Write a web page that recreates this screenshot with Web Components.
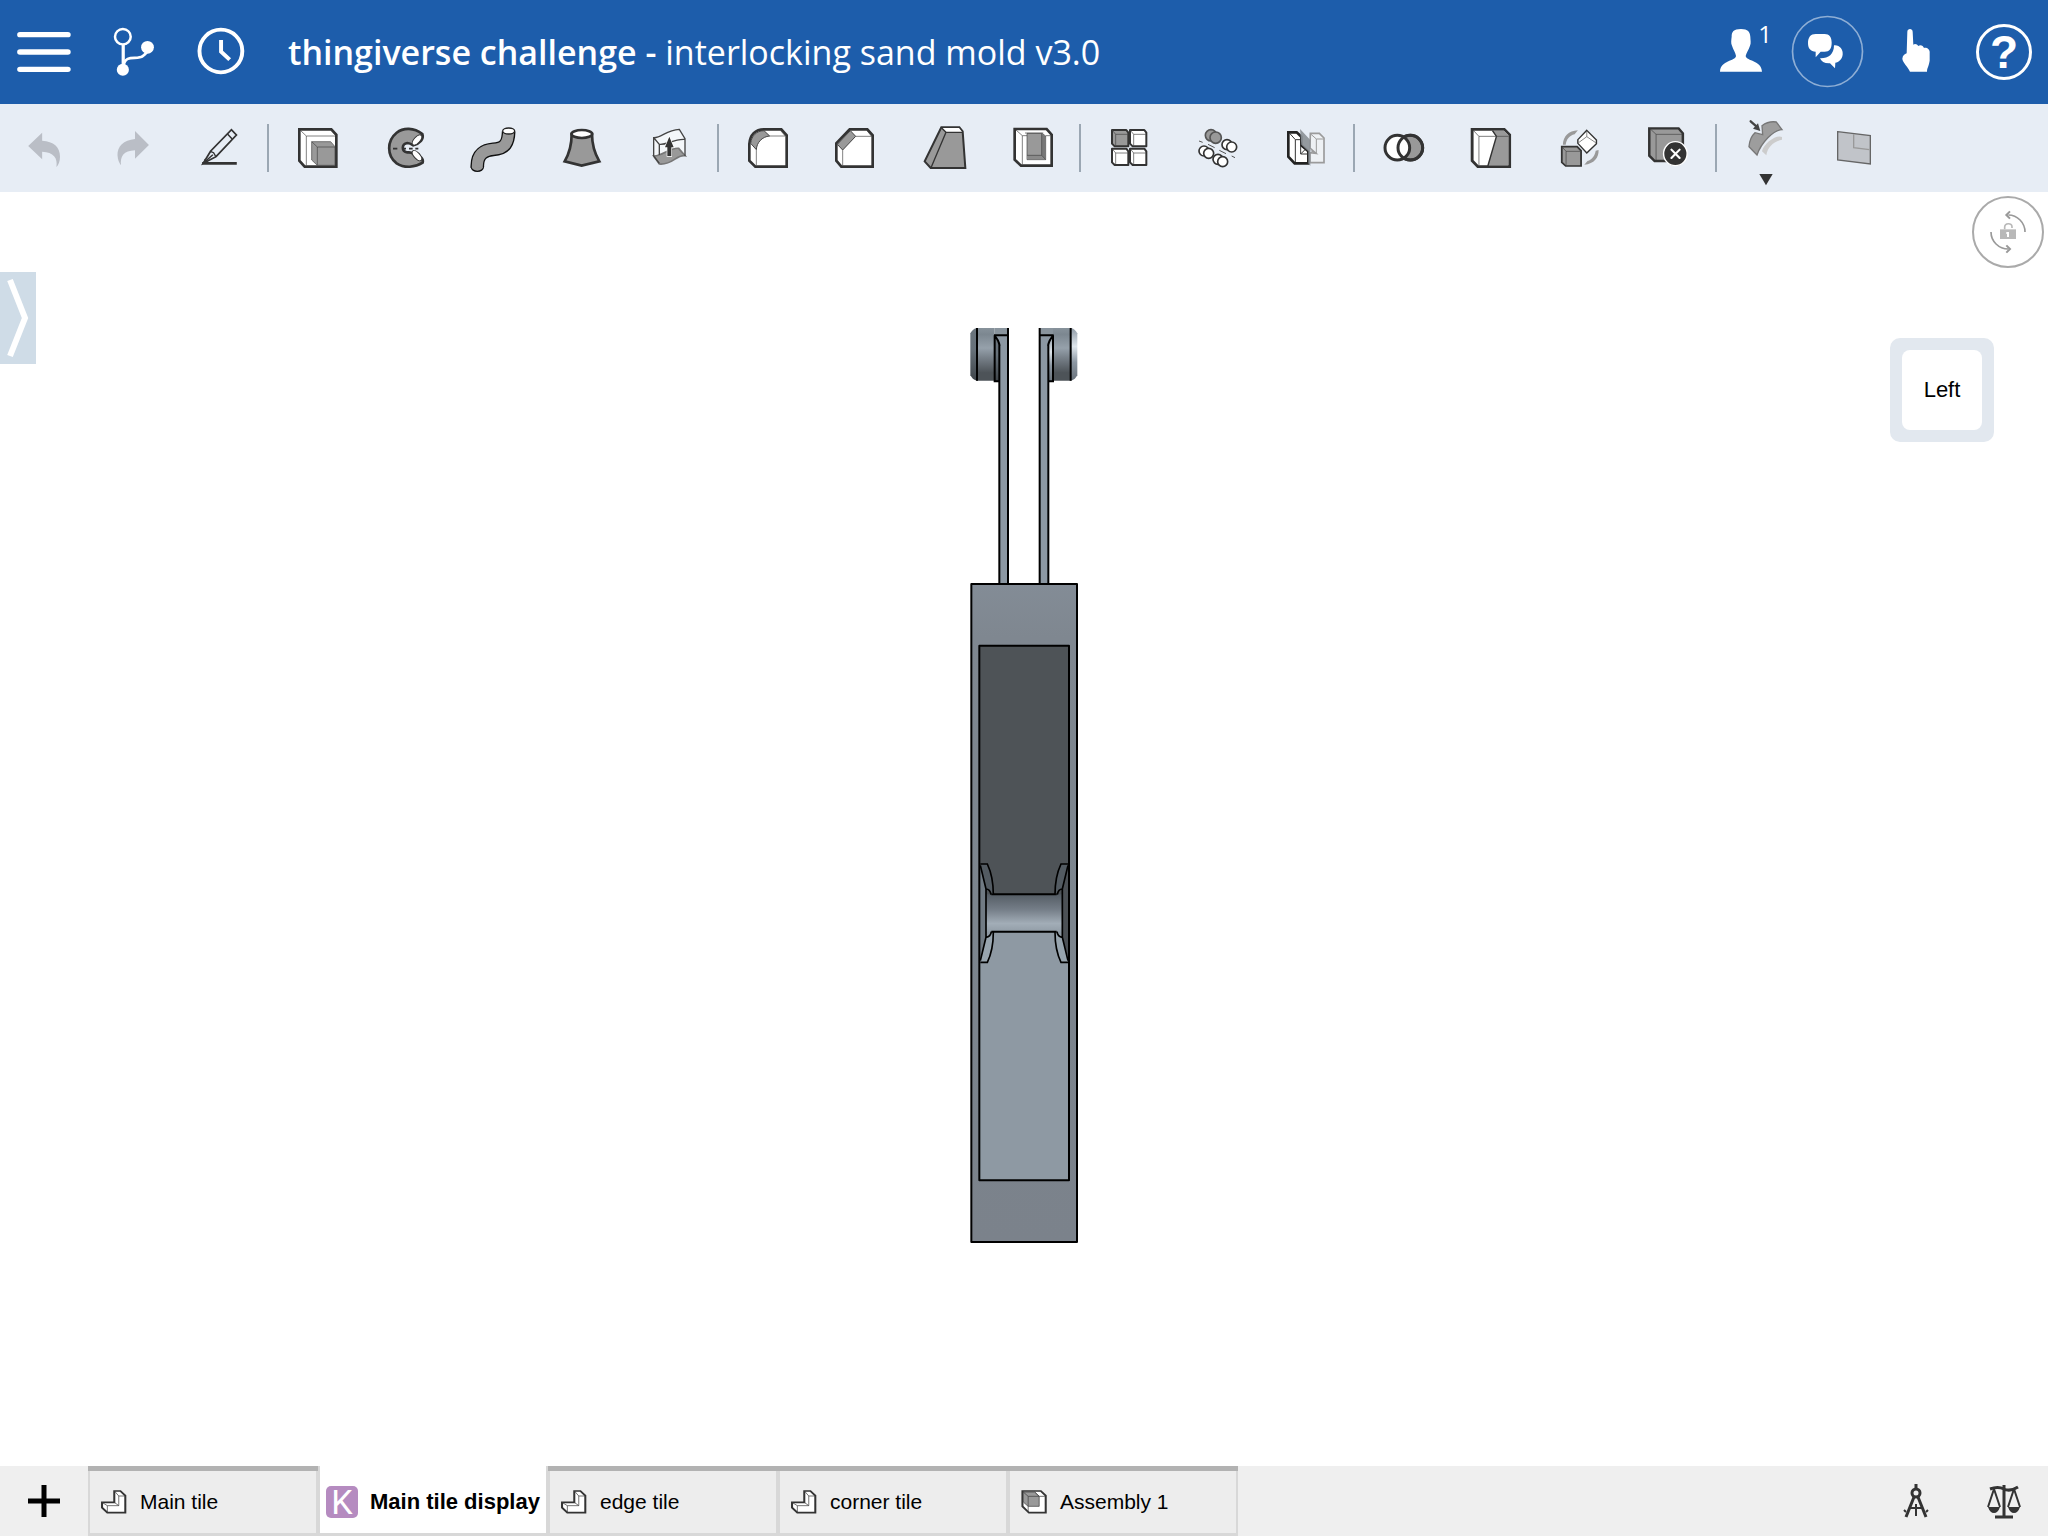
<!DOCTYPE html>
<html lang="en">
<head>
<meta charset="utf-8">
<meta name="viewport" content="width=device-width, initial-scale=1">
<title>thingiverse challenge - interlocking sand mold v3.0</title>
<style>
html, body { margin: 0; height: 100%; background: #fff; }
body { font-family: "Liberation Sans", Arial, sans-serif; color: #000; }
</style>
</head>
<body>
<cad-app></cad-app>
<script>
/* Icon artwork: [viewBox, markup]. */
const cubeLines = 'fill="none" stroke="#444" stroke-width="2"';
const miniCube = (x, y, fill) => `<g transform="translate(${x} ${y})"><path d="M3 3H46L52 11V52H11L3 44Z" fill="${fill}" stroke="#333" stroke-width="6" stroke-linejoin="round"/><path d="M4 4L14 16H50M14 16V50" ${cubeLines}/></g>`;
const disc = (x, y, r, fill, s) => `<g fill="${fill}" stroke="${s}" stroke-width="5"><circle cx="${x}" cy="${y}" r="${r}"/><circle cx="${x + 14}" cy="${y + 7}" r="${r}"/></g>`;
const ICONS = {
  menu: ['0 0 246.4 312', '<path d="M56 104H190M56 156H190M56 208H190" stroke="#fff" stroke-width="16" stroke-linecap="round"/>'],
  branch: ['246.4 0 246.4 312', '<g fill="none" stroke="#fff"><ellipse cx="344" cy="110" rx="22" ry="23" stroke-width="7"/><path d="M345 134V205" stroke-width="9"/><path d="M346 196C352 160 384 182 400 168C408 162 413 156 413 146" stroke-width="8"/></g><g fill="#fff"><ellipse cx="344" cy="209" rx="17" ry="18"/><ellipse cx="413" cy="142" rx="18" ry="19"/></g>'],
  history: ['492.8 0 246.4 312', '<ellipse cx="618.500" cy="153" rx="60" ry="64" fill="none" stroke="#fff" stroke-width="11"/><path d="M619 120V155L643 179" fill="none" stroke="#fff" stroke-width="11"/>'],
  user: ['48 0 264 312', '<path d="M183 87C160 87 155 96 155 110C154 118 152 130 156 137C160 150 167 158 168 168C166 184 122 180 120 215H246C244 180 200 184 197 168C199 158 206 150 210 137C214 130 211 118 211 110C210 96 204 87 183 87Z" fill="#fff"/>'],
  chat: ['312 0 264 312', '<circle cx="442.500" cy="154.500" r="105" fill="none" stroke="#8eaed5" stroke-width="5"/><path d="M407 102H434C448 102 455 112 455 128C455 146 448 155 434 155H422L407 172V155C392 154 384 146 384 129C384 112 392 102 407 102Z" fill="#fff"/><path d="M462 136C478 134 490 148 488 164C486 178 476 186 466 188L465 205L450 190C434 191 424 185 420 175C444 176 462 164 462 136Z" fill="#fff"/>'],
  touch: ['576 0 264 312', '<path d="M682 95C682 84 698 84 698 95L700 134C706 130 712 134 715 138C722 133 730 138 732 144C740 142 751 148 749 160V182C746 200 741 204 741 215H690C684 200 668 188 667 176C668 166 674 162 680 160Z" fill="#fff"/>'],
  undo: ['0 312 246.4 264', '<path d="M79 438L118 398V422C150 424 168 440 168 470C168 484 164 494 158 501C162 474 150 456 118 455V478Z" fill="#babec6"/>'],
  redo: ['246.4 312 246.4 264', '<path d="M417 435L378 393V417C346 420 328 440 329 466C330 480 333 488 339 496C336 470 346 452 378 451V476Z" fill="#babec6"/>'],
  sketch: ['492.8 312 246.4 264', '<path d="M590 453L648 389L662 405L605 470L569 490Z" fill="none" stroke="#333" stroke-width="5"/><path d="M589 454L598 458L605 471M637 402L650 417M569 490L596 464" fill="none" stroke="#333" stroke-width="4"/><path d="M569 490L573 476L583 486Z" fill="#333"/><path d="M566 490H663" stroke="#333" stroke-width="8"/>'],
  extrude: ['42 -18 264 264', `<path d="M118 58H214L229 74V170H134L118 152Z" fill="#fff" stroke="#333" stroke-width="8"/><path d="M122 62L139 78H226M139 78V166M212 60L226 76" ${cubeLines}/><path d="M155 95H212L225 110V166H172L155 150Z" fill="#999" stroke="#444" stroke-width="2"/><path d="M155 95L172 111H225M172 111V166" ${cubeLines}/>`],
  revolve: ['306 -18 264 264', '<path d="M487 72C462 52 430 52 410 68C380 92 380 138 410 160C434 176 466 172 488 158C491 146 482 136 460 132C454 126 448 128 442 127C424 124 424 102 442 99C448 99 454 102 460 106C480 100 492 88 487 72Z" fill="#999" stroke="#333" stroke-width="8" stroke-linejoin="round"/><g fill="#fff" stroke="#333" stroke-width="3"><ellipse cx="471" cy="90" rx="19" ry="9" transform="rotate(-48 471 90)"/><ellipse cx="471" cy="137" rx="19" ry="9" transform="rotate(48 471 137)"/></g><path d="M399 116H412M430 116H438M447 116H458M466 116H475" stroke="#333" stroke-width="5"/>'],
  sweep: ['570 -18 264 264', '<ellipse cx="652" cy="172" rx="18" ry="12" fill="#999" stroke="#111" stroke-width="4"/><path d="M652 172C650 130 676 120 700 118C736 116 745 98 746 64" fill="none" stroke="#111" stroke-width="41"/><path d="M652 174C650 130 676 120 700 118C736 116 745 98 746 62" fill="none" stroke="#999" stroke-width="33"/><ellipse cx="746" cy="63" rx="18" ry="9" fill="#fff" stroke="#222" stroke-width="4"/>'],
  loft: ['834 -18 264 264', '<path d="M935 72C935 105 928 130 914 154L965 167L1018 154C1004 130 996 105 996 72Z" fill="#999" stroke="#333" stroke-width="8"/><ellipse cx="965.500" cy="72" rx="31" ry="12" fill="#fff" stroke="#333" stroke-width="8"/>'],
  thicken: ['1098 -18 264 264', '<path d="M1182 83C1205 84 1218 60 1258 58L1275 86V137L1240 130L1182 138Z" fill="#f4f7fa"/><path d="M1181 138C1204 140 1230 112 1256 115L1275 137C1250 132 1238 166 1198 162Z" fill="#999" stroke="#777" stroke-width="5"/><path d="M1181 138V83C1205 84 1218 60 1258 58L1275 86V138M1182 84L1198 103C1220 106 1240 86 1274 88M1198 103V135M1181 138L1198 160" fill="none" stroke="#444" stroke-width="4"/><path d="M1228 80L1241 112H1234V138H1222V112H1215Z" fill="#333" stroke="#fff" stroke-width="4" paint-order="stroke"/>'],
  fillet: ['72 -18 264 264', `<path d="M192 58H244L260 76V170H166L148 152V102C150 74 166 58 192 58Z" fill="#fff" stroke="#333" stroke-width="8"/><path d="M152 100C154 78 170 62 192 62L209 78C186 80 170 98 169 119Z" fill="#999" stroke="#444" stroke-width="3"/><path d="M256 78H209M169 119V166M241 61L256 78" ${cubeLines}/>`],
  chamfer: ['336 -18 264 264', `<path d="M449 58H502L518 76V170H424L409 152V100Z" fill="#fff" stroke="#333" stroke-width="8"/><path d="M412 103L451 62L467 79L428 120Z" fill="#999" stroke="#444" stroke-width="3"/><path d="M515 79H467M428 120V166M500 61L515 79" ${cubeLines}/>`],
  draft: ['600 -18 264 264', '<path d="M724 52H778L788 64L796 174H692L674 154Z" fill="#999" stroke="#333" stroke-width="6"/><path d="M727 54H777L786 66H738Z" fill="#fff"/><path d="M725 54L738 67H788M738 67L693 173" fill="none" stroke="#333" stroke-width="4"/>'],
  shell: ['864 -18 264 264', `<path d="M944 57H1040L1055 74V167H963L944 149Z" fill="#fff" stroke="#333" stroke-width="8"/><path d="M981 70H1026L1037 78V149H981Z" fill="#999" stroke="#444" stroke-width="2"/><path d="M1025 71L1036 79V148L1025 136Z" fill="#777"/><path d="M981 136H1025L1036 148H981Z" fill="#8a8a8a"/><path d="M948 60L967 77V163M967 77H981M1037 77H1052M975 69H1030M1025 71V136H981M1025 136L1037 149" ${cubeLines}/>`],
  pattern: ['18 -18 264 264', miniCube(93, 57, '#999') + miniCube(147, 57, '#fff') + miniCube(93, 113, '#fff') + miniCube(147, 113, '#fff')],
  circular: ['282 -18 264 264', disc(393, 76, 17, '#999', '#555') + disc(441, 104, 15, '#fff', '#333') + disc(372, 123, 15, '#fff', '#333') + disc(414, 148, 15, '#fff', '#333') + '<path d="M357 93L368 97M384 103L404 113M418 121L438 131M455 138L465 143" stroke="#555" stroke-width="3"/>'],
  mirror: ['546 -18 264 264', '<path d="M691 70H718L732 84V158H690V128L708 130L690 114Z" fill="#eef1f4" stroke="#9b9b9b" stroke-width="5"/><path d="M692 72L709 87H730M709 87V130L692 122" fill="none" stroke="#9b9b9b" stroke-width="3"/><path d="M625 67H650L664 80V106L685 124V160H644L625 140Z" fill="#fff" stroke="#222" stroke-width="8"/><path d="M629 70L646 89H662M646 89V156M662 89V132H684M662 132L674 120" fill="none" stroke="#333" stroke-width="3"/><path d="M660 57L691 90V168L685 160V124L664 104Z" fill="#8b9096" fill-opacity=".9"/>'],
  boolean: ['840 -18 264 264', '<g stroke="#333" stroke-width="9"><circle cx="991" cy="113" r="37" fill="#999"/><circle cx="952" cy="113" r="37" fill="#fff"/><circle cx="991" cy="113" r="37" fill="none"/></g>'],
  split: ['302.4 -18 246.4 264', `<path d="M370 58H460L475 74V170H386L370 152Z" fill="#fff" stroke="#333" stroke-width="8"/><path d="M427 62H459L472 76V166H414L438 79Z" fill="#999"/><path d="M427 62L438 79L414 168" fill="none" stroke="#333" stroke-width="4"/><path d="M374 62L389 79H472M389 79V166" ${cubeLines}/>`],
  transform: ['548.8 -18 246.4 264', `<path d="M621 110H664L675 122V168H632L621 157Z" fill="#999" stroke="#333" stroke-width="5"/><path d="M622 111L633 124H674M633 124V166" ${cubeLines}/><path d="M691 61L718 90V101L691 129L666 100V89Z" fill="#fff" stroke="#333" stroke-width="4"/><path d="M691 63V80L668 98M691 80L716 98" fill="none" stroke="#555" stroke-width="2"/><path d="M624 104C625 80 640 62 666 61L657 73C642 77 634 88 632 104Z" fill="#999"/><path d="M724 120C725 142 712 162 684 164L693 153C706 148 713 138 716 122Z" fill="#999"/>`],
  remove: ['795.2 -18 246.4 264', `<path d="M866 55H948L960 70V153H881L866 137Z" fill="#999" stroke="#333" stroke-width="7"/><path d="M870 58L885 73H958M885 73V150" ${cubeLines}/><ellipse cx="939" cy="131" rx="33" ry="36" fill="#333" stroke="#fff" stroke-width="4"/><path d="M928 119L951 144M951 119L928 144" stroke="#fff" stroke-width="6" stroke-linecap="round"/>`],
  moveface: ['126 312 264 264', '<path d="M306 411C290 402 250 430 246 454L259 466C262 442 280 424 306 419Z" fill="#ccc"/><path d="M246 377C262 365 276 364 289 366L306 389C280 390 244 428 231 465L207 440C208 425 214 408 225 398L248 404Z" fill="#9d9d9d" stroke="#777" stroke-width="4"/><path d="M212 364L230 380" stroke="#444" stroke-width="7" stroke-linecap="round"/><path d="M241 393L219 386L234 370Z" fill="#444"/><path d="M238 522H278L258 556Z" fill="#333"/>'],
  plane: ['390 312 264 264', '<path d="M473 395L571 407V492L473 480Z" fill="#c1c4c9" stroke="#666" stroke-width="4"/><path d="M521 403V443L568 449" fill="none" stroke="#999" stroke-width="4"/>'],
  unlock: ['876 588 216 216', '<g fill="none" stroke="#999" stroke-width="5"><path d="M985 645C1012 645 1035 668 1035 696M933 696C933 724 956 747 985 747"/><path d="M990 634L979 645L990 656M979 736L990 747L979 758" stroke-width="6"/></g><path d="M960 688H1008V717H960Z" fill="#b8b8b8"/><path d="M974 688V682C974 668 996 668 996 680V684" fill="none" stroke="#b8b8b8" stroke-width="5"/><path d="M979 696H987V711H981V702H979Z" fill="#fff"/>'],
  part: ['245 114 68.600 78', '<path d="M280 120H295L307 134V185H263L250 170V154H280Z" fill="#fff" stroke="#333" stroke-width="5"/><path d="M281 121L291 135H306M291 135V164H263L251 155M263 164V184M291 164L280 154" fill="none" stroke="#444" stroke-width="2"/>'],
  assembly: ['980 114 68.600 78', '<path d="M986 120H1031L1043 134V185H1002L986 166Z" fill="#fff" stroke="#333" stroke-width="5"/><path d="M988 123H1016L1027 136V166H1000L988 153Z" fill="#999" stroke="#444" stroke-width="2"/><path d="M988 123L1000 136H1027M1000 136V184M1016 123L1027 136H1041" fill="none" stroke="#444" stroke-width="2"/>'],
  add: ['0 0 88 70', '<path d="M28 35H60M44 19V51" stroke="#000" stroke-width="5"/>'],
  compass: ['0 0 88 70', '<g fill="none" stroke="#333" stroke-width="3"><path d="M44 18V23"/><circle cx="44" cy="27" r="4"/><path d="M42 31L34 51M46 31L54 51"/><path d="M44 38V50M38 42H50M34 46L32 44M54 46L56 44" stroke-width="2"/></g>'],
  scales: ['0 0 88 70', '<g fill="none" stroke="#333" stroke-width="2"><path d="M44 19V50M35 51H53M30 23Q38 20 44 23Q50 26 58 21" stroke-width="3"/><path d="M34 23L28 41M34 23L40 41M54 23L48 41M54 23L60 41"/></g><path d="M28 41H40Q38 47 34 47Q30 47 28 41ZM48 41H60Q58 47 54 47Q50 47 48 41Z" fill="#333"/>']
};

class CadElement extends HTMLElement {
  paint(css, html) {
    if (!this.shadowRoot) this.attachShadow({ mode: 'open' });
    this.shadowRoot.innerHTML = `<style>*{box-sizing:border-box}${css}</style>${html}`;
  }
}

class CadIcon extends CadElement {
  connectedCallback() {
    const [box, art] = ICONS[this.getAttribute('name')];
    this.paint(':host{display:block}svg{display:block;width:100%;height:100%}',
      `<svg viewBox="${box}" preserveAspectRatio="none" aria-hidden="true">${art}</svg>`);
  }
}

/* Square icon button; its height follows the bar that holds it. */
class CadButton extends CadElement {
  connectedCallback() {
    const icon = this.getAttribute('icon');
    this.paint(`
      :host { display: block; flex: none; width: 88px; align-self: stretch; }
      button { display: grid; grid-template: 100% / 100%; place-items: center; width: 100%; height: 100%; padding: 0; border: 0; background: none; color: inherit; font: inherit; cursor: pointer; }
      cad-icon { width: 100%; height: 100%; }
      :host([off]) button { cursor: default; }`,
      `<button type="button" aria-label="${this.getAttribute('label')}" ${this.hasAttribute('off') ? 'disabled' : ''}>
        ${icon ? `<cad-icon name="${icon}"></cad-icon>` : '<slot></slot>'}</button>`);
  }
}

class CadHeader extends CadElement {
  connectedCallback() {
    this.paint(`
      :host { display: flex; align-items: center; height: 104px; background: #1d5dab; color: #fff; font-family: "Open Sans", sans-serif; }
      h1 { flex: 1; margin: 0 24px; font-size: 34px; line-height: 44px; font-weight: 400; white-space: nowrap; }
      .people { display: grid; width: 88px; height: 104px; }
      .people > * { grid-area: 1 / 1; }
      .count { justify-self: end; padding: 20px 12px 0 0; font-size: 24px; line-height: 28px; }
      .help { display: grid; place-items: center; width: 56px; height: 56px; border: 3px solid #fff; border-radius: 50%; font: 700 46px/50px "Liberation Sans", sans-serif; }`,
      `<cad-button icon="menu" label="Menu"></cad-button>
       <cad-button icon="branch" label="Versions"></cad-button>
       <cad-button icon="history" label="History"></cad-button>
       <h1><slot></slot></h1>
       <cad-button label="People"><span class="people"><cad-icon name="user"></cad-icon><span class="count">1</span></span></cad-button>
       <cad-button icon="chat" label="Comments"></cad-button>
       <cad-button icon="touch" label="Follow"></cad-button>
       <cad-button label="Help"><span class="help">?</span></cad-button>`);
  }
}

class CadToolbar extends CadElement {
  connectedCallback() {
    const groups = ['undo redo sketch', 'extrude revolve sweep loft thicken', 'fillet chamfer draft shell',
      'pattern circular mirror', 'boolean split transform remove', 'moveface plane'];
    this.paint(`
      :host { display: flex; align-items: center; height: 88px; background: #e7edf5; }
      hr { flex: none; width: 2px; height: 48px; margin: 0 5px 0 3px; border: 0; background: #9ba7b3; }`,
      groups.map(g => g.split(' ').map(n => `<cad-button icon="${n}" label="${n}" ${/do$/.test(n) ? 'off' : ''}></cad-button>`).join('')).join('<hr>'));
  }
}

class CadModel extends CadElement {
  connectedCallback() {
    const arm = hi => `
      <path d="M80 54C70 56 66 62 61 70V196C66 204 70 210 80 212Z" fill="url(#${hi})"/>
      <path d="M80 54H134V212H80Z" fill="url(#wheel)"/><path d="M134 54H174V78H134Z" fill="#89949d"/>
      <path d="M134 78L150 106V214H134Z" fill="url(#${hi})"/>
      <path d="M134 77H174V822H148V106Z" fill="#8c98a3"/>
      <path d="M81 54V212M174 54V822M148 106V822M132 76H174M134 76V214H148M134 78Q146 90 149 108" fill="none" stroke="#000" stroke-width="6"/>`;
    const clip = side => `
      <path d="M90 76L108 147V292L90 356Z" fill="${side}"/>
      <path d="M92 72H112Q130 110 130 164L122 152L108 147Z" fill="#535b62"/>
      <path d="M92 367H112Q130 330 130 276L122 290L108 292Z" fill="#98a5af"/>
      <path d="M91 72H112Q130 110 130 164M91 76L108 147Q120 147 123 164M91 367H112Q130 330 130 276M91 362L108 292Q122 290 124 275M108 147V292" fill="none" stroke="#000" stroke-width="5"/>`;
    this.paint(':host{display:block;width:120px}svg{display:block;width:100%;height:auto}', `
      <svg viewBox="42 42 360 2772" role="img" aria-label="Left view of the mold">
        <defs>
          <linearGradient id="wheel" x2="0" y2="1"><stop stop-color="#87929b"/><stop offset=".12" stop-color="#7c8790"/><stop offset=".38" stop-color="#96a1ab"/><stop offset=".55" stop-color="#7a838c"/><stop offset=".85" stop-color="#4d5358"/><stop offset="1" stop-color="#4d5358"/></linearGradient>
          <linearGradient id="dim" x2="0" y2="1"><stop stop-color="#6a747c"/><stop offset=".4" stop-color="#67717a"/><stop offset="1" stop-color="#3f454a"/></linearGradient>
          <linearGradient id="shine" x2="0" y2="1"><stop stop-color="#8f9aa5"/><stop offset=".35" stop-color="#dfe6ec"/><stop offset=".65" stop-color="#8c97a2"/><stop offset="1" stop-color="#69727b"/></linearGradient>
          <linearGradient id="axle" x2="0" y2="1"><stop stop-color="#555d65"/><stop offset=".4" stop-color="#747d87"/><stop offset=".78" stop-color="#a2adb7"/><stop offset="1" stop-color="#929da7"/></linearGradient>
          <linearGradient id="body" x2="0" y2="1"><stop stop-color="#838c96"/><stop offset=".08" stop-color="#7f8790"/><stop offset=".5" stop-color="#7c858e"/><stop offset="1" stop-color="#7b828b"/></linearGradient>
        </defs>
        ${arm('dim')}<g transform="translate(443 0) scale(-1 1)">${arm('shine')}</g>
        <path d="M64 822H381V2796H64Z" fill="url(#body)" stroke="#000" stroke-width="6" stroke-linejoin="round"/>
        <path d="M88 1007H357V1760H88Z" fill="#4e5357"/>
        <path d="M88 1860H357V2611H88Z" fill="#8e99a3"/>
        <g transform="translate(0 1590)">
          <path d="M108 163H336V275H108Z" fill="url(#axle)"/>
          <path d="M124 163H320M124 275H320" stroke="#000" stroke-width="6"/>
          ${clip('#717b84')}<g transform="translate(445 0) scale(-1 1)">${clip('#4c5156')}</g>
        </g>
        <path d="M88 1007H357V2611H88Z" fill="none" stroke="#000" stroke-width="6" stroke-linejoin="round"/>
      </svg>`);
  }
}

class CadStage extends CadElement {
  connectedCallback() {
    this.paint(`
      :host { display: grid; grid-template-columns: 1fr auto 1fr; align-items: start; background: #fff; overflow: hidden; }
      button { display: block; padding: 0; border: 0; background: none; color: #000; font: inherit; cursor: pointer; }
      .drawer { width: 36px; height: 92px; margin-top: 80px; background: #cfdce7; }
      .drawer svg { display: block; }
      cad-model { margin-top: 132px; }
      .side { display: flex; flex-direction: column; align-items: flex-end; gap: 70px; padding: 4px 4px 0 0; }
      .lock { width: 72px; height: 72px; border: 2px solid #aaa; border-radius: 50%; }
      .lock cad-icon { width: 72px; height: 72px; margin: -2px; }
      .cube { width: 104px; height: 104px; margin-right: 50px; border: 12px solid #e2e8ef; border-radius: 10px; background: #e2e8ef; }
      .cube span { display: block; border-radius: 8px; background: #fff; font-size: 22px; line-height: 80px; }`,
      `<button class="drawer" type="button" aria-label="Open feature list"><svg width="36" height="92" viewBox="0 0 36 92"><path d="M10 8L25 46L10 84" fill="none" stroke="#fff" stroke-width="6"/></svg></button>
       <cad-model></cad-model>
       <div class="side">
         <button class="lock" type="button" aria-label="Lock rotation"><cad-icon name="unlock"></cad-icon></button>
         <button class="cube" type="button"><span>Left</span></button>
       </div>`);
  }
}

class CadTab extends CadElement {
  connectedCallback() {
    const on = this.hasAttribute('active');
    this.paint(`
      :host { display: grid; grid-template: 5px 1fr / 1fr; flex: 0 1 230px; background: #b2b2b2; }
      button { grid-area: 2 / 1; display: flex; align-items: center; gap: 12px; padding: 0 0 0 10px; border: solid #d8d8d8; border-width: 0 2px 3px; background: #ededed; color: #000; font: inherit; font-size: 21px; line-height: 28px; white-space: nowrap; cursor: pointer; }
      button.on { grid-area: 1 / 1 / 3; padding: 4px 0 0 6px; background: #fff; font-size: 22px; font-weight: 700; }
      cad-icon { width: 28px; height: 26px; }
      .badge { width: 32px; height: 32px; border-radius: 5px; background: #b58bc0; color: #fff; font: 400 34px/32px Roboto, sans-serif; text-align: center; }`,
      `<button type="button" role="tab" aria-selected="${on}" class="${on ? 'on' : ''}">
        ${on ? '<span class="badge">K</span>' : `<cad-icon name="${this.getAttribute('icon')}"></cad-icon>`}<span><slot></slot></span></button>`);
  }
}

class CadTabs extends CadElement {
  connectedCallback() {
    this.paint(`
      :host { display: flex; height: 70px; background: #efefef; }
      nav { display: flex; flex: 1; min-width: 0; }`,
      `<cad-button icon="add" label="Add tab"></cad-button><nav role="tablist"><slot></slot></nav>
       <cad-button icon="compass" label="Measure"></cad-button><cad-button icon="scales" label="Mass properties"></cad-button>`);
  }
}

class CadApp extends CadElement {
  connectedCallback() {
    this.paint(`
      :host { display: flex; flex-direction: column; min-height: 100vh; }
      cad-stage { flex: 1; }
      b { font-weight: 600; }`,
      `<cad-header><b>thingiverse challenge - </b>interlocking sand mold v3.0</cad-header>
       <cad-toolbar></cad-toolbar>
       <cad-stage></cad-stage>
       <cad-tabs>
         <cad-tab icon="part">Main tile</cad-tab>
         <cad-tab active>Main tile display</cad-tab>
         <cad-tab icon="part">edge tile</cad-tab>
         <cad-tab icon="part">corner tile</cad-tab>
         <cad-tab icon="assembly">Assembly 1</cad-tab>
       </cad-tabs>`);
  }
}

for (const [tag, type] of [['cad-icon', CadIcon], ['cad-button', CadButton], ['cad-header', CadHeader], ['cad-toolbar', CadToolbar],
  ['cad-model', CadModel], ['cad-stage', CadStage], ['cad-tab', CadTab], ['cad-tabs', CadTabs], ['cad-app', CadApp]]) {
  customElements.define(tag, type);
}
</script>
</body>
</html>
